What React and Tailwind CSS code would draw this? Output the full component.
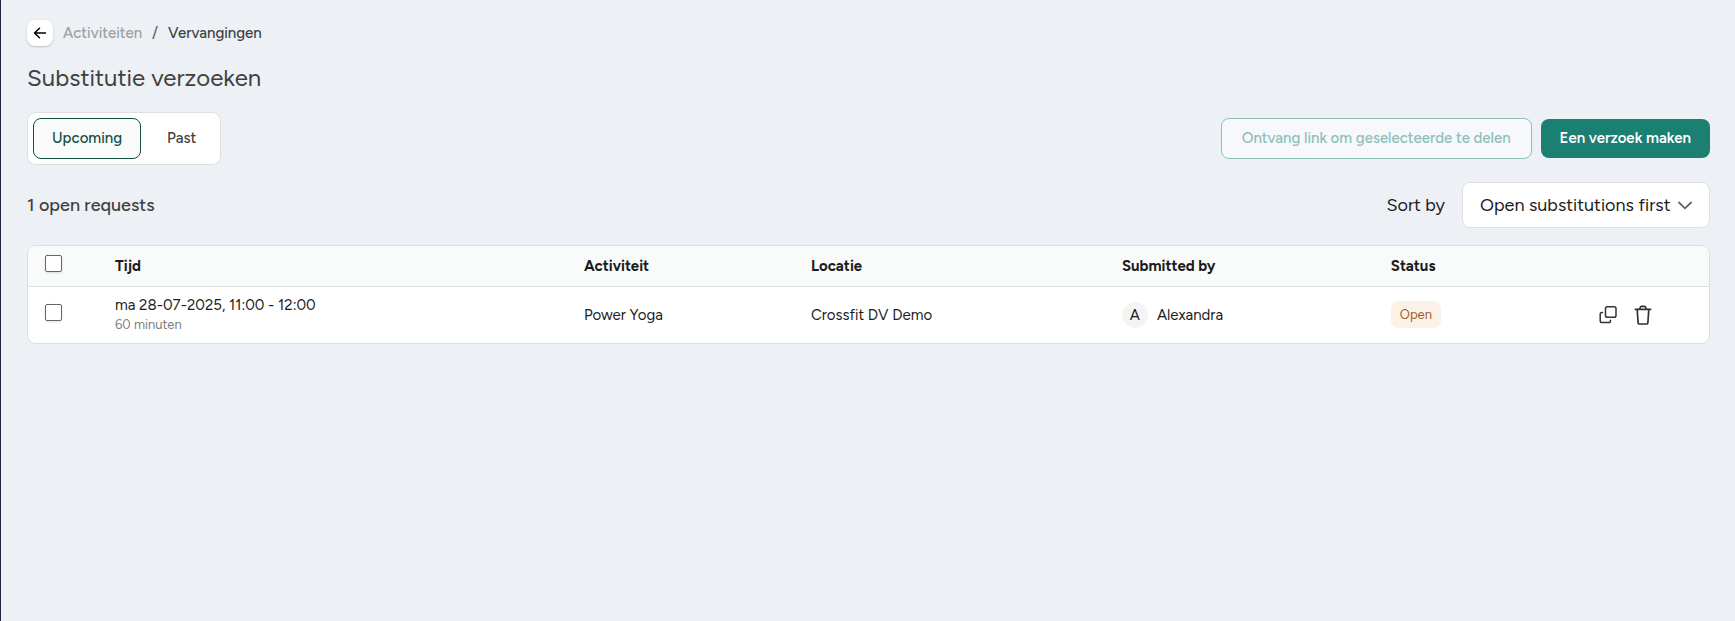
import React, { useState } from 'react';

const tabs = [
  { id: 'upcoming', label: 'Upcoming' },
  { id: 'past', label: 'Past' }
];

const requests = [
  {
    id: 1,
    time: 'ma 28-07-2025, 11:00 - 12:00',
    duration: '60 minuten',
    activity: 'Power Yoga',
    location: 'Crossfit DV Demo',
    submittedBy: 'Alexandra',
    status: 'Open'
  }
];

const ArrowLeftIcon = () => (
  <svg className="w-4 h-4" viewBox="0 0 16 16" fill="none" stroke="currentColor" strokeWidth="1.5" strokeLinecap="round" strokeLinejoin="round" aria-hidden="true">
    <path d="M13.500 8H2.500M7.500 3.200L2.500 8l5 4.800" />
  </svg>
);

const ChevronDownIcon = () => (
  <svg className="w-4 h-4 text-[#666666]" viewBox="0 0 16 16" fill="none" stroke="currentColor" strokeWidth="1.8" strokeLinecap="round" strokeLinejoin="round" aria-hidden="true">
    <path d="M2 5.500l6 5.800 6-5.800" />
  </svg>
);

const CopyIcon = () => (
  <svg className="w-5 h-5" viewBox="0 0 20 20" fill="none" stroke="currentColor" strokeWidth="1.5" strokeLinecap="round" strokeLinejoin="round" aria-hidden="true">
    <rect x="7.500" y="1.800" width="10.500" height="10.500" rx="1.800" />
    <path d="M4.500 7.500H4A1.800 1.800 0 0 0 2.200 9.300v6.500A1.800 1.800 0 0 0 4 17.600h6.700a1.800 1.800 0 0 0 1.800-1.800v-.5" />
  </svg>
);

const TrashIcon = () => (
  <svg className="w-5 h-5" viewBox="0 0 20 20" fill="none" stroke="currentColor" strokeWidth="1.7" strokeLinecap="round" strokeLinejoin="round" aria-hidden="true">
    <path d="M2.300 4.300h15.400" />
    <path d="M6.700 4l.6-1.700a1.300 1.300 0 0 1 1.200-.9h3a1.300 1.300 0 0 1 1.200.9l.6 1.700" />
    <path d="M4.200 4.500l.9 13.100a1.500 1.500 0 0 0 1.500 1.400h6.800a1.500 1.500 0 0 0 1.500-1.400l.9-13.100" />
  </svg>
);

const Checkbox = ({ label, checked, onChange }) => (
  <input
    type="checkbox"
    aria-label={label}
    checked={checked}
    onChange={onChange}
    className="block w-[17px] h-[17px] mb-1 appearance-none rounded-xs border border-[#666666] bg-white shadow-sm checked:bg-[#1b8072]"
  />
);

const App = () => {
  const [activeTab, setActiveTab] = useState('upcoming');
  const [selected, setSelected] = useState([]);

  const allSelected = selected.length === requests.length;

  const toggleAll = () => {
    setSelected(allSelected ? [] : requests.map((request) => request.id));
  };

  const toggleRequest = (id) => {
    setSelected(selected.includes(id) ? selected.filter((item) => item !== id) : [...selected, id]);
  };

  return (
    <div className="min-h-screen border-l border-[#20243a] bg-[#edf0f5] pl-[26px] pr-[25px] pt-5 font-['Figtree','Lato',sans-serif] text-[15px] text-[#1c1c1c]">
      {/* Breadcrumb */}
      <nav className="flex items-center gap-[10px] h-[26px] font-medium" aria-label="Breadcrumb">
        <button aria-label="Terug" className="flex items-center justify-center w-[26px] h-[26px] rounded-lg bg-white text-black shadow-[0_1px_2px_rgba(0,0,0,0.22)]">
          <ArrowLeftIcon />
        </button>
        <a href="#activiteiten" className="text-[#a0a0a0]">Activiteiten</a>
        <span className="text-[#666666]">/</span>
        <span className="text-[#404040]">Vervangingen</span>
      </nav>

      <h1 className="mt-[15px] text-[24px] leading-[34px] text-[#404040]">Substitutie verzoeken</h1>

      {/* Tabs and actions */}
      <div className="mt-[17px] flex items-center justify-between">
        <div className="flex gap-[7px] p-[5px] rounded-[9px] border border-[#e0e0e0] bg-white" role="tablist">
          {tabs.map((tab) => (
            <button
              key={tab.id}
              role="tab"
              aria-selected={activeTab === tab.id}
              onClick={() => setActiveTab(tab.id)}
              className={`h-[41px] px-[18px] border rounded-lg font-medium ${
                activeTab === tab.id
                  ? 'border-[#134e43] bg-[#f9fbfa] text-[#134e43]'
                  : 'border-transparent text-[#404040]'
              }`}
            >
              {tab.label}
            </button>
          ))}
        </div>
        <div className="flex items-center gap-[9px]">
          <button className="h-[41px] px-5 rounded-lg border border-[#8cbfb8] bg-[#f6f8fc] font-medium text-[#8cbfb8]">
            Ontvang link om geselecteerde te delen
          </button>
          <button className="h-[39px] px-[19px] rounded-lg bg-[#1b8072] font-semibold text-white">
            Een verzoek maken
          </button>
        </div>
      </div>

      {/* Count and sorting */}
      <div className="mt-[17px] flex items-center justify-between text-lg">
        <p className="font-medium text-[#404040]">1 open requests</p>
        <div className="flex items-center gap-[17px]">
          <label htmlFor="sort">Sort by</label>
          <div className="relative">
            <select id="sort" className="h-[46px] w-[248px] appearance-none rounded-lg border border-[#e0e0e0] bg-white pl-[17px] pr-9">
              <option>Open substitutions first</option>
              <option>Newest first</option>
            </select>
            <span className="pointer-events-none absolute inset-y-0 right-[17px] flex items-center">
              <ChevronDownIcon />
            </span>
          </div>
        </div>
      </div>

      {/* Requests */}
      <div className="mt-[17px] overflow-hidden rounded-[9px] border border-[#dcdfe0] bg-white">
        <table className="w-full table-fixed text-left">
          <thead className="bg-[#f9fbfa]">
            <tr className="h-10 border-b border-[#dcdfe0]">
              <th className="w-[70px] pl-[17px]">
                <Checkbox label="Alles selecteren" checked={allSelected} onChange={toggleAll} />
              </th>
              <th className="w-[27.9%] pl-[17px] font-bold">Tijd</th>
              <th className="w-[13.5%] pl-[17px] font-bold">Activiteit</th>
              <th className="w-[18.5%] pl-[17px] font-bold">Locatie</th>
              <th className="w-[16%] pl-[17px] font-bold">Submitted by</th>
              <th className="w-[12.3%] pl-[17px] font-bold">Status</th>
              <th aria-label="Acties" />
            </tr>
          </thead>
          <tbody>
            {requests.map((request) => (
              <tr key={request.id} className="h-[57px]">
                <td className="pl-[17px]">
                  <Checkbox
                    label={request.time}
                    checked={selected.includes(request.id)}
                    onChange={() => toggleRequest(request.id)}
                  />
                </td>
                <td className="pl-[17px]">
                  <p className="leading-5">{request.time}</p>
                  <p className="text-[13px] leading-5 text-[#808080]">{request.duration}</p>
                </td>
                <td className="pl-[17px]">{request.activity}</td>
                <td className="pl-[17px]">{request.location}</td>
                <td className="pl-[17px]">
                  <div className="flex items-center gap-[9px]">
                    <span className="flex items-center justify-center w-[26px] h-[26px] rounded-full bg-[#f4f4f4]">
                      {request.submittedBy[0]}
                    </span>
                    <span>{request.submittedBy}</span>
                  </div>
                </td>
                <td className="pl-[17px]">
                  <span className="inline-flex items-center h-[27px] px-[9px] rounded-lg bg-[#fcf1e7] text-[13px] text-[#9c5f2e]">
                    {request.status}
                  </span>
                </td>
                <td className="pl-[17px]">
                  <div className="flex items-center gap-[15px] text-[#333333]">
                    <button aria-label="Kopiëren">
                      <CopyIcon />
                    </button>
                    <button aria-label="Verwijderen">
                      <TrashIcon />
                    </button>
                  </div>
                </td>
              </tr>
            ))}
          </tbody>
        </table>
      </div>
    </div>
  );
};

export default App;
